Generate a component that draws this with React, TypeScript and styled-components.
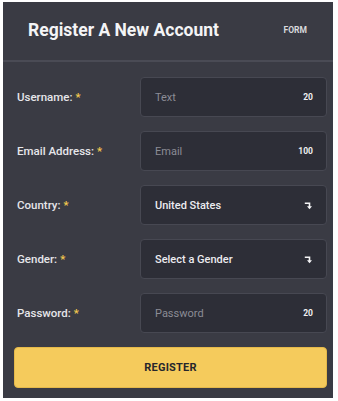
import React from "react";
import styled, { createGlobalStyle } from "styled-components";

const GlobalStyle = createGlobalStyle`
  body {
    margin: 0;
    background: #ffffff;
    font-family: Roboto, "Noto Sans", sans-serif;
  }
`;

const Panel = styled.div`
  margin: 2px 5px 3px 3px;
  width: 330px;
  height: 396px;
  background: #3a3b44;
  display: flex;
  flex-direction: column;
  box-sizing: border-box;
`;

const Header = styled.header`
  height: 60px;
  flex: none;
  display: flex;
  align-items: center;
  justify-content: space-between;
  padding: 0 26px 2px 25px;
  border-bottom: 2px solid #4a4b55;
  box-sizing: border-box;
`;

const Title = styled.h1`
  margin: 0;
  font-size: 17.5px;
  font-weight: 700;
  color: #f4f4f6;
`;

const Tag = styled.span`
  font-size: 8.5px;
  font-weight: 700;
  color: #d8d8dc;
`;

const Form = styled.form`
  display: flex;
  flex-direction: column;
  gap: 14px;
  padding: 15px 6px 9px 11px;
`;

const Row = styled.div`
  display: grid;
  grid-template-columns: 1fr 187px;
  align-items: center;
  height: 40px;
`;

const Label = styled.label`
  padding-left: 3px;
  font-size: 11.5px;
  font-weight: 500;
  color: #e6e6ea;
`;

const Star = styled.span`
  color: #f5c94f;
  margin-left: 3px;
`;

const Field = styled.div`
  height: 40px;
  box-sizing: border-box;
  background: #2d2e37;
  border: 1px solid #474852;
  border-radius: 4px;
  display: flex;
  align-items: center;
  justify-content: space-between;
  padding: 0 13px 0 14px;
`;

const Value = styled.span<{ $placeholder?: boolean }>`
  font-size: 11px;
  font-weight: ${(p) => (p.$placeholder ? 400 : 500)};
  color: ${(p) => (p.$placeholder ? "#8b8c95" : "#ececf0")};
`;

const Count = styled.span`
  font-size: 8.5px;
  font-weight: 700;
  color: #f0f0f2;
`;

const Button = styled.button`
  height: 41px;
  width: 313px;
  border: 1px solid #e5b94a;
  border-radius: 4px;
  background: #f5cb5c;
  color: #26262c;
  font-family: inherit;
  font-size: 11px;
  font-weight: 700;
  letter-spacing: 0.2px;
`;

const Arrow = () => (
  <svg width="9" height="9" viewBox="0 0 9 9">
    <path d="M0.8 2.3 H5.5 V6.5" fill="none" stroke="#f4f4f6" strokeWidth="1.6" />
    <path d="M3 5.2 L5.5 8.2 L8 5.2 Z" fill="#f4f4f6" />
  </svg>
);

type FieldDef = {
  label: string;
  value: string;
  placeholder?: boolean;
  count?: string;
  select?: boolean;
};

const fields: FieldDef[] = [
  { label: "Username:", value: "Text", placeholder: true, count: "20" },
  { label: "Email Address:", value: "Email", placeholder: true, count: "100" },
  { label: "Country:", value: "United States", select: true },
  { label: "Gender:", value: "Select a Gender", select: true },
  { label: "Password:", value: "Password", placeholder: true, count: "20" },
];

export default function App() {
  return (
    <>
      <GlobalStyle />
      <Panel>
        <Header>
          <Title>Register A New Account</Title>
          <Tag>FORM</Tag>
        </Header>
        <Form onSubmit={(e) => e.preventDefault()}>
          {fields.map((f) => (
            <Row key={f.label}>
              <Label>
                {f.label}
                <Star>*</Star>
              </Label>
              <Field>
                <Value $placeholder={f.placeholder}>{f.value}</Value>
                {f.select ? <Arrow /> : <Count>{f.count}</Count>}
              </Field>
            </Row>
          ))}
          <Button type="submit">REGISTER</Button>
        </Form>
      </Panel>
    </>
  );
}
